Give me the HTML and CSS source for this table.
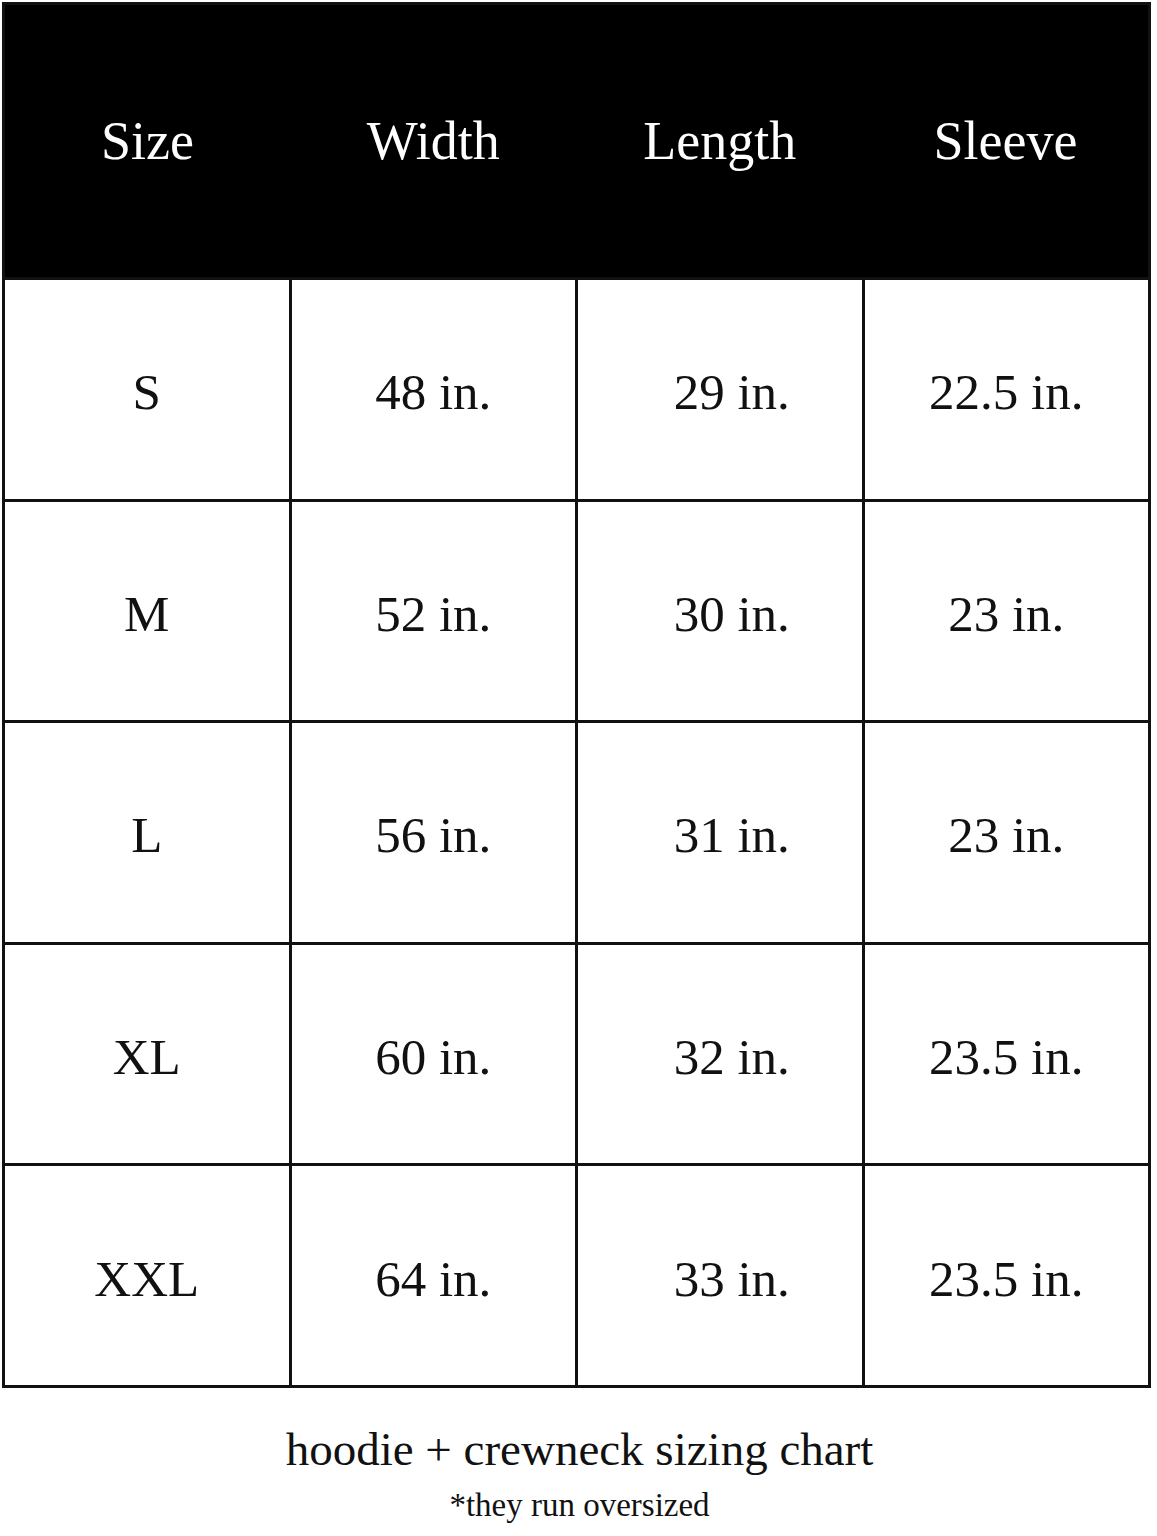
FILE: index.html
```html
<!DOCTYPE html>
<html>
<head>
<meta charset="utf-8">
<link rel="stylesheet" href="styles.css">
</head>
<body>
<main class="page">
  <table class="chart">
    <thead>
      <tr class="head-row">
        <th>Size</th>
        <th>Width</th>
        <th>Length</th>
        <th>Sleeve</th>
      </tr>
    </thead>
    <tbody>
      <tr><td>S</td><td>48 in.</td><td class="len">29 in.</td><td>22.5 in.</td></tr>
      <tr><td>M</td><td>52 in.</td><td class="len">30 in.</td><td>23 in.</td></tr>
      <tr><td>L</td><td>56 in.</td><td class="len">31 in.</td><td>23 in.</td></tr>
      <tr><td>XL</td><td>60 in.</td><td class="len">32 in.</td><td>23.5 in.</td></tr>
      <tr><td>XXL</td><td>64 in.</td><td class="len">33 in.</td><td>23.5 in.</td></tr>
    </tbody>
  </table>
  <p class="caption">hoodie + crewneck sizing chart</p>
  <p class="note">*they run oversized</p>
</main>
</body>
</html>
```
FILE: styles.css
```css
html, body {
  margin: 0;
  padding: 0;
  background: #fff;
}
.page {
  padding: 2px 0 0 2px;
  font-family: "Liberation Serif", "Times New Roman", serif;
  color: #111;
}
.chart {
  width: 1149px;
  border-collapse: collapse;
  table-layout: fixed;
  border: 3px solid #111;
}
.head-row th {
  height: 272px;
  background: #000;
  color: #fff;
  font-weight: normal;
  font-size: 54px;
  padding: 0;
  text-align: center;
  vertical-align: middle;
}
.chart td {
  height: 212.6px;
  border: 3px solid #111;
  font-size: 51px;
  text-align: center;
  vertical-align: middle;
  padding: 6px 0 0;
}
.chart td.len {
  padding-left: 24px;
}
.caption {
  margin: 33px 0 0;
  text-align: center;
  font-size: 47px;
  line-height: 56px;
}
.note {
  margin: 6px 0 0;
  text-align: center;
  font-size: 33px;
  line-height: 44px;
}
```
